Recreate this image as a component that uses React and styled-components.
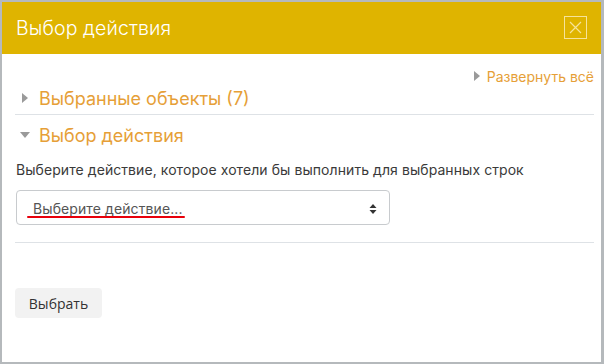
import React from "react";
import styled, { createGlobalStyle } from "styled-components";

const Global = createGlobalStyle`
  html, body { margin: 0; padding: 0; }
  body {
    background: #b5b9bc;
    font-family: Inter, "Noto Sans", sans-serif;
    width: 604px;
    height: 364px;
    overflow: hidden;
  }
`;

const Page = styled.div`
  padding: 2px 3px 2px 2px;
`;

const Modal = styled.div`
  width: 599px;
  height: 360px;
  background: #fff;
  display: flex;
  flex-direction: column;
`;

const Header = styled.div`
  height: 52px;
  background: #dfb400;
  display: flex;
  align-items: center;
  justify-content: space-between;
  padding: 0 14px 0 14px;
  box-sizing: border-box;
`;

const Title = styled.h1`
  margin: 0;
  font-weight: 300;
  font-size: 19.5px;
  letter-spacing: 0.1px;
  color: #fff;
`;

const Close = styled.button`
  width: 23px;
  height: 23px;
  margin-top: -2px;
  padding: 0;
  border: 1px solid #f6e39a;
  background: transparent;
  display: flex;
  align-items: center;
  justify-content: center;
`;

const Body = styled.div`
  padding: 0 7px 0 13px;
  display: flex;
  flex-direction: column;
`;

const ExpandRow = styled.div`
  display: flex;
  justify-content: flex-end;
  align-items: center;
  gap: 7px;
  margin-top: 12px;
  height: 20px;
`;

const Link = styled.span`
  color: #e69f38;
  font-size: 14px;
`;

const Tri = styled.span`
  width: 0;
  height: 0;
  border-style: solid;
  ${(p) =>
    p.$down
      ? `border-width: 6px 5.5px 0 5.5px; border-color: #9a9a9a transparent transparent transparent;`
      : `border-width: 5.5px 0 5.5px 6px; border-color: transparent transparent transparent #9a9a9a;`}
`;

const Section = styled.div`
  display: flex;
  align-items: center;
  gap: ${(p) => (p.$down ? "9px" : "11px")};
  height: 24px;
  padding-left: ${(p) => (p.$down ? "5px" : "7px")};
  padding-top: ${(p) => (p.$down ? "8px" : "0")};
  padding-bottom: ${(p) => (p.$line ? "4px" : "0")};
  border-bottom: ${(p) => (p.$line ? "1px solid #dee2e6" : "none")};
`;

const SectionTitle = styled.span`
  color: #e69f38;
  font-size: 18px;
  font-weight: 400;
`;

const Text = styled.p`
  margin: 13px 0 0 1px;
  font-size: 14px;
  letter-spacing: 0.07px;
  color: #3a3a3a;
  line-height: 20px;
`;

const Select = styled.div`
  margin: 10px 0 0 1px;
  width: 374px;
  height: 35px;
  box-sizing: border-box;
  border: 1px solid #c8cbce;
  border-radius: 4px;
  display: flex;
  align-items: center;
  justify-content: space-between;
  padding: 2px 12px 0 16px;
  position: relative;
`;

const SelectText = styled.span`
  font-size: 14px;
  letter-spacing: 0.1px;
  color: #555;
`;

const Underline = styled.span`
  position: absolute;
  left: 10px;
  top: 25px;
  width: 158px;
  height: 2px;
  background: #e8000b;
  border-radius: 1px;
`;

const Divider = styled.div`
  margin-top: 17px;
  border-top: 1px solid #dee2e6;
`;

const Button = styled.button`
  margin: 45px 0 0 0;
  align-self: flex-start;
  width: 87px;
  height: 30px;
  border: none;
  border-radius: 4px;
  background: #f2f2f2;
  color: #333;
  font-family: "Open Sans", "Noto Sans", sans-serif;
  font-size: 14px;
  padding: 0;
`;

export default function App() {
  return (
    <>
      <Global />
      <Page>
        <Modal>
          <Header>
            <Title>Выбор действия</Title>
            <Close aria-label="close">
              <svg width="13" height="13" viewBox="0 0 13 13">
                <path d="M1 1L12 12M12 1L1 12" stroke="#f6e39a" strokeWidth="1.2" />
              </svg>
            </Close>
          </Header>
          <Body>
            <ExpandRow>
              <Tri />
              <Link>Развернуть всё</Link>
            </ExpandRow>
            <Section $line>
              <Tri />
              <SectionTitle>Выбранные объекты (7)</SectionTitle>
            </Section>
            <Section $down>
              <Tri $down />
              <SectionTitle>Выбор действия</SectionTitle>
            </Section>
            <Text>Выберите действие, которое хотели бы выполнить для выбранных строк</Text>
            <Select>
              <SelectText>Выберите действие...</SelectText>
              <svg width="8" height="12" viewBox="0 0 8 12">
                <path d="M4 1L7.5 5H0.5Z M4 11L7.5 7H0.5Z" fill="#333" />
              </svg>
              <Underline />
            </Select>
            <Divider />
            <Button>Выбрать</Button>
          </Body>
        </Modal>
      </Page>
    </>
  );
}
